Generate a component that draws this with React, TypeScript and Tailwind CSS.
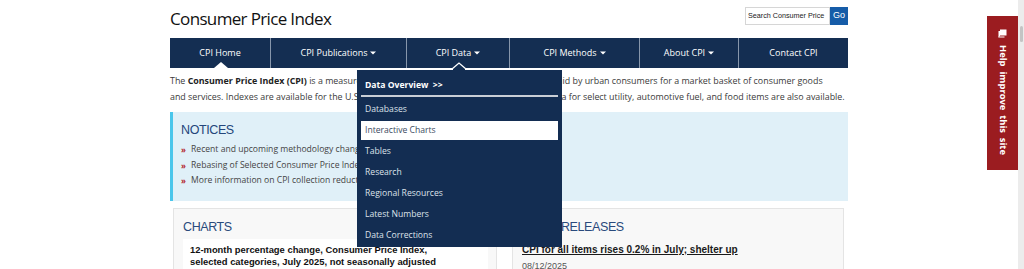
import React from "react";

const navItems: { label: string; w: string; caret: boolean }[] = [
  { label: "CPI Home", w: "w-[101px]", caret: false },
  { label: "CPI Publications", w: "w-[136px]", caret: true },
  { label: "CPI Data", w: "w-[103px]", caret: true },
  { label: "CPI Methods", w: "w-[130px]", caret: true },
  { label: "About CPI", w: "w-[99px]", caret: true },
  { label: "Contact CPI", w: "w-[109px]", caret: false },
];

const menuItems = [
  "Databases",
  "Interactive Charts",
  "Tables",
  "Research",
  "Regional Resources",
  "Latest Numbers",
  "Data Corrections",
];

function Caret() {
  return (
    <svg width="6" height="4" viewBox="0 0 6 4" className="ml-[3px] inline-block">
      <path d="M0 0.5 L6 0.5 L3 3.5 Z" fill="#ffffff" />
    </svg>
  );
}

export default function App() {
  return (
    <div className="w-[1024px] h-[269px] overflow-hidden flex bg-white font-['Open_Sans',sans-serif] text-[#333]">
      <div className="relative flex-1">
        <div className="ml-[170px] w-[678px]">
          {/* header */}
          <div className="h-[38px] flex justify-between">
            <div className="pt-[6px] text-[17px] leading-[26px] tracking-[-0.65px] text-[#111]">Consumer Price Index</div>
            <div className="pt-[7px] flex h-[25px]">
              <div className="w-[85px] h-[18px] border border-[#d6d6d6] flex items-center pl-[2px] text-[7.2px] text-[#222] font-['Liberation_Sans',Arial,sans-serif] whitespace-nowrap overflow-hidden">
                Search Consumer Price
              </div>
              <div className="w-[18px] h-[18px] bg-[#165ca8] flex items-center justify-center text-white text-[9px] font-['Liberation_Sans',Arial,sans-serif]">
                Go
              </div>
            </div>
          </div>

          {/* nav */}
          <div className="h-[30px] flex bg-[#142e52]">
            {navItems.map((n, i) => (
              <div
                key={n.label}
                className={`relative ${n.w} h-full flex items-center justify-center text-white text-[9px] ${
                  i < navItems.length - 1 ? "border-r border-[#8796ab]" : ""
                }`}
              >
                <span>{n.label}</span>
                {n.caret && <Caret />}
                {i === 0 && (
                  <svg width="14" height="6" viewBox="0 0 14 6" className="absolute bottom-0 left-[44px]">
                    <path d="M0 6 L7 0 L14 6 Z" fill="#ffffff" />
                  </svg>
                )}
              </div>
            ))}
          </div>

          {/* intro */}
          <p className="mt-[5px] text-[8.9px] leading-[16px] text-[#3a3a3a] whitespace-nowrap">
            The <b className="text-[#222]">Consumer Price Index (CPI)</b> is a measure of the average change over time in the
            prices paid by urban consumers for a market basket of consumer goods
            <br />
            and services. Indexes are available for the U.S. and various geographic areas. Average price data for select
            utility, automotive fuel, and food items are also available.
          </p>

          {/* notices */}
          <div className="mt-[7px] h-[89px] bg-[#e0f0f8] border-l-[3px] border-[#4ac6eb] pl-[8px] pt-[10px]">
            <div className="text-[12.5px] leading-[16px] tracking-[-0.4px] text-[#24467b] font-['Liberation_Sans',Arial,sans-serif]">
              NOTICES
            </div>
            <ul className="mt-[4px] text-[8.6px] leading-[15.5px] text-[#444]">
              {[
                "Recent and upcoming methodology changes",
                "Rebasing of Selected Consumer Price Index Series",
                "More information on CPI collection reductions",
              ].map((t) => (
                <li key={t} className="flex items-center">
                  <span className="w-[10px] text-[#b3232a] font-bold text-[8px]">»</span>
                  <span>{t}</span>
                </li>
              ))}
            </ul>
          </div>

          {/* panels */}
          <div className="mt-[7px] ml-[3px] flex gap-[15px]">
            <div className="w-[324px] h-[80px] bg-[#f8f8f8] border border-[#e4e4e4] pl-[9px] pr-[8px] pt-[10px]">
              <div className="text-[12.5px] leading-[16px] tracking-[-0.4px] text-[#2a4a7c] font-['Liberation_Sans',Arial,sans-serif]">
                CHARTS
              </div>
              <div className="mt-[4px] h-[40px] bg-white px-[7px] pt-[5px] text-[9.4px] leading-[12px] font-bold text-[#111] font-['Liberation_Sans',Arial,sans-serif]">
                12-month percentage change, Consumer Price Index,
                <br />
                selected categories, July 2025, not seasonally adjusted
              </div>
            </div>
            <div className="w-[332px] h-[80px] bg-[#f8f8f8] border border-[#e4e4e4] pl-[9px] pt-[10px] font-['Liberation_Sans',Arial,sans-serif]">
              <div className="text-[12.5px] leading-[16px] tracking-[-0.4px] text-[#2a4a7c]">NEWS RELEASES</div>
              <div className="mt-[8px] text-[10px] leading-[14px] font-bold underline text-[#1a1a1a]">
                CPI for all items rises 0.2% in July; shelter up
              </div>
              <div className="mt-[2px] text-[9px] leading-[14px] text-[#555]">08/12/2025</div>
            </div>
          </div>
        </div>

        {/* CPI Data hover caret */}
        <svg width="16" height="8" viewBox="0 0 16 8" className="absolute left-[451px] top-[62px]">
          <path d="M1 7 L8 1 L15 7" fill="#142e52" stroke="#ffffff" strokeWidth="1.3" />
          <rect x="2" y="7" width="12" height="1" fill="#142e52" />
        </svg>

        {/* dropdown */}
        <div className="absolute left-[357px] top-[70px] w-[205px] h-[177px] bg-[#132d52] pt-[8px]">
          <div className="px-[8px] text-[8.6px] leading-[14px] font-bold text-white">Data Overview &nbsp;&gt;&gt;</div>
          <div className="mx-[4px] mt-[3px] h-[1.5px] bg-[#c9ced6]" />
          <div className="mt-[2.5px]">
            {menuItems.map((m) => (
              <div key={m} className="mx-[4px] h-[21px] py-[1px]">
                <div
                  className={`h-full flex items-center px-[4px] text-[8.6px] ${
                    m === "Interactive Charts" ? "bg-white text-[#3b4a60]" : "text-[#dde2ea]"
                  }`}
                >
                  {m}
                </div>
              </div>
            ))}
          </div>
        </div>

        {/* feedback tab */}
        <div className="absolute left-[987px] top-[16px] w-[31px] h-[154px] bg-[#9b1c20] flex flex-col items-center pt-[13px]">
          <svg width="9" height="9" viewBox="0 0 9 9">
            <rect x="2" y="0.5" width="6.5" height="6" fill="#ffffff" />
            <path d="M2 2 L0.5 2 L0.5 8.5 L2 7 Z" fill="#ffffff" />
            <rect x="0.5" y="7.5" width="6" height="1" fill="#ffffff" />
          </svg>
          <div className="mt-[7px] [writing-mode:vertical-rl] text-white font-bold text-[9.4px] whitespace-nowrap">
            Help &nbsp;improve &nbsp;this &nbsp;site
          </div>
        </div>
      </div>

      {/* scrollbar */}
      <div className="w-[6px] h-full bg-[#ececec] flex justify-center">
        <div className="mt-[26px] w-[3px] h-[16px] bg-[#c4c4c4] rounded-full" />
      </div>
    </div>
  );
}
